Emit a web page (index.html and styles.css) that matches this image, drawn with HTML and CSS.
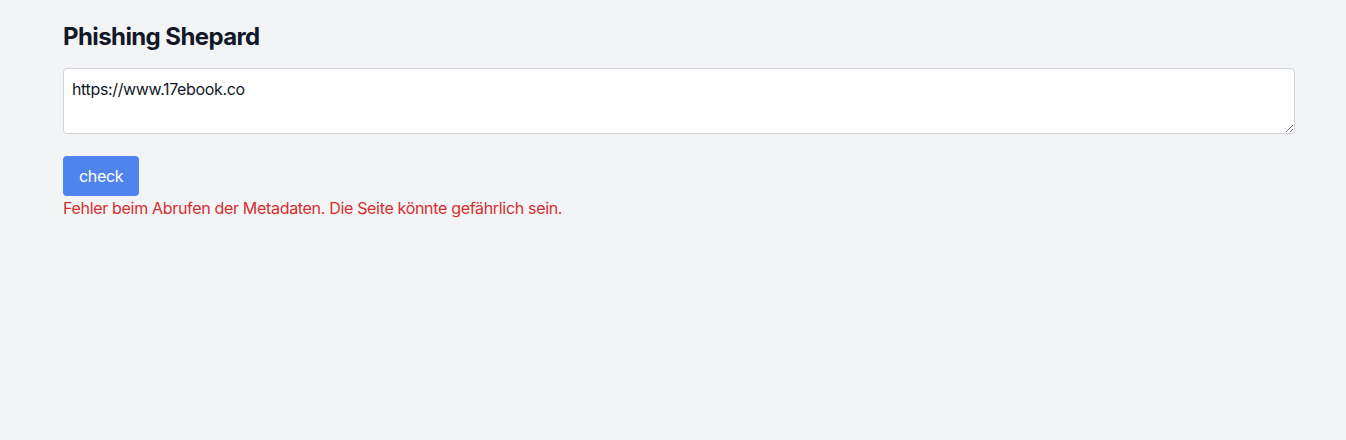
FILE: index.html
```html
<!DOCTYPE html>
<html lang="de">
<head>
<meta charset="utf-8">
<title>Phishing Shepard</title>
<link rel="stylesheet" href="styles.css">
</head>
<body>
<main class="container">
  <h1 class="title">Phishing Shepard</h1>
  <textarea class="url-input" rows="2">https://www.17ebook.co</textarea>
  <div class="actions">
    <button class="check-btn" type="button">check</button>
  </div>
  <p class="error">Fehler beim Abrufen der Metadaten. Die Seite könnte gefährlich sein.</p>
</main>
</body>
</html>
```
FILE: styles.css
```css
html, body {
  margin: 0;
  padding: 0;
  background: #f3f4f6;
  font-family: Inter, "Noto Sans", "Liberation Sans", sans-serif;
  color: #111827;
}
.container {
  width: 1232px;
  margin-left: 63px;
  padding-top: 21px;
}
.title {
  margin: 0 0 15px;
  font-size: 24px;
  line-height: 32px;
  font-weight: 700;
  color: #111827;
  letter-spacing: -0.6px;
}
.url-input {
  display: block;
  box-sizing: border-box;
  width: 100%;
  height: 66px;
  margin: 0;
  padding: 8px;
  border: 1px solid #d1d5db;
  border-radius: 4px;
  background: #fff;
  font-family: inherit;
  font-size: 16px;
  line-height: 24px;
  letter-spacing: -0.35px;
  color: #111827;
  resize: vertical;
}
.actions {
  display: flex;
  margin-top: 22px;
}
.check-btn {
  height: 40px;
  padding: 0 16px;
  border: none;
  border-radius: 4px;
  background: #4f84ef;
  color: #fff;
  font-family: inherit;
  font-size: 16px;
  line-height: 24px;
  letter-spacing: -0.35px;
  cursor: pointer;
}
.error {
  margin: 0;
  font-size: 16px;
  line-height: 24px;
  letter-spacing: -0.32px;
  color: #d32f2f;
}
```
